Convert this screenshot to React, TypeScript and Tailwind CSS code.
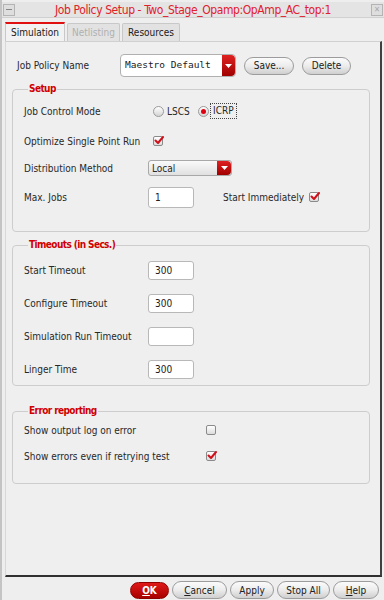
import React from "react";

const FONT = "font-['DejaVu_Sans_Condensed','DejaVu_Sans',sans-serif]";

function Check({ checked }: { checked: boolean }) {
  return (
    <span className="relative inline-flex h-[10px] w-[10px] items-center justify-center rounded-[2px] border border-[#8a8a8a] bg-gradient-to-b from-[#ffffff] to-[#dcdcdc]">
      {checked && (
        <svg width="10" height="9" viewBox="0 0 10 9" className="absolute left-[0px] top-[-1px]">
          <path d="M1.5 4.5 L4 7 L9 1" stroke="#d0101a" strokeWidth="2" fill="none" strokeLinecap="round" strokeLinejoin="round" />
        </svg>
      )}
    </span>
  );
}

function Radio({ on }: { on: boolean }) {
  return (
    <span className="inline-flex h-[11px] w-[11px] items-center justify-center rounded-full border border-[#9a9a9a] bg-gradient-to-b from-[#ffffff] to-[#d4d4d4]">
      {on && <span className="h-[5px] w-[5px] rounded-full bg-[#e00010]" />}
    </span>
  );
}

function DropBtn({ w, h }: { w: string; h: string }) {
  return (
    <span className={`flex ${w} ${h} items-center justify-center rounded-r-[4px] bg-gradient-to-b from-[#e02020] to-[#a00000]`}>
      <svg width="7" height="4" viewBox="0 0 7 4">
        <path d="M0 0 L7 0 L3.5 4 Z" fill="#ffffff" />
      </svg>
    </span>
  );
}

function PillButton({ children, w, className = "" }: { children: React.ReactNode; w: string; className?: string }) {
  return (
    <span
      className={`flex ${w} h-[18px] items-center justify-center rounded-full border border-[#9c9c9c] bg-gradient-to-b from-[#fbfbfb] via-[#ececec] to-[#cfcfcf] text-[10px] text-[#202020] ${className}`}
    >
      {children}
    </span>
  );
}

function TextBox({ value, w, h }: { value: string; w: string; h: string }) {
  return (
    <span className={`flex ${w} ${h} items-center rounded-[3px] border border-[#b8b8b8] bg-white pl-[6px] text-[10px] text-[#202020]`}>
      {value}
    </span>
  );
}

function Legend({ children }: { children: React.ReactNode }) {
  return (
    <legend className="ml-[4px] h-[14px] px-[1px] text-[10px] font-bold leading-[14px] tracking-[-0.6px] text-[#d00000]">{children}</legend>
  );
}

export default function App() {
  return (
    <div className={`${FONT} relative h-[600px] w-[384px] overflow-hidden bg-[#eeeeee] text-[10px] text-[#282828]`}>
      <div className="flex h-full flex-col border-l-[2px] border-[#c4c4c4]">
        {/* title bar */}
        <div className="mt-[2px] flex h-[16px] items-center border-b border-[#d0d0d0] bg-[#e4e4e4] pl-[1px] pr-[1px]">
          <span className="flex h-[12px] w-[12px] items-center justify-center border border-[#b4b4b4] bg-[#dedede]">
            <span className="h-[1px] w-[6px] bg-[#888]" />
          </span>
          <span className="flex-1 text-center text-[12px] leading-[16px] tracking-[-0.4px] text-[#e0202c]">
            Job Policy Setup - Two_Stage_Opamp:OpAmp_AC_top:1
          </span>
          <span className="flex h-[12px] w-[12px] items-center justify-center border border-[#b4b4b4] bg-[#dedede] text-[8px] leading-none text-[#aaa]">
            ✕
          </span>
        </div>

        {/* tabs */}
        <div className="ml-[3px] mt-[4px] flex h-[19px] items-end gap-[2px]">
          <span className="flex h-[19px] w-[60px] items-center justify-center border-l border-r border-[#c8c8c8] border-t-[2px] border-t-[#e01010] bg-[#f2f2f2] text-[#202020]">
            Simulation
          </span>
          <span className="flex h-[18px] w-[53px] items-center justify-center rounded-t-[2px] border border-b-0 border-[#c8c8c8] bg-[#e2e2e2] text-[#b0b0b0]">
            Netlisting
          </span>
          <span className="flex h-[18px] w-[58px] items-center justify-center rounded-t-[2px] border border-b-0 border-[#c8c8c8] bg-[#e2e2e2] text-[#202020]">
            Resources
          </span>
        </div>

        {/* panel */}
        <div className="ml-[3px] mr-[2px] flex h-[536px] flex-col border-b-[2px] border-l border-r-[2px] border-t border-b-[#303030] border-l-[#d8d8d8] border-r-[#404040] border-t-[#d0d0d0] bg-[#efefef] pl-[6px] pr-[10px]">
          {/* Job policy name */}
          <div className="mt-[12px] flex h-[23px] items-center">
            <span className="ml-[5px] w-[103px]">Job Policy Name</span>
            <span className="flex h-[23px] w-[116px] items-stretch rounded-[4px] border border-[#b0b0b0] bg-white">
              <span className="flex flex-1 items-center pl-[4px] font-['DejaVu_Sans_Mono',monospace] text-[9.5px] text-[#202020]">
                Maestro Default
              </span>
              <DropBtn w="w-[13px]" h="h-auto" />
            </span>
            <PillButton w="w-[50px]" className="ml-[8px]">Save...</PillButton>
            <PillButton w="w-[49px]" className="ml-[8px]">Delete</PillButton>
          </div>

          {/* Setup */}
          <fieldset className="mt-[5px] h-[150px] rounded-[4px] border border-[#cdcdcd] px-[11px]">
            <Legend>Setup</Legend>
            <div className="mt-[5px] flex h-[20px] items-center">
              <span className="w-[129px]">Job Control Mode</span>
              <Radio on={false} />
              <span className="ml-[3px] w-[31px]">LSCS</span>
              <Radio on={true} />
              <span className="ml-[1px] border border-dotted border-[#444] px-[2px] leading-[14px]">ICRP</span>
            </div>
            <div className="mt-[10px] flex h-[20px] items-center">
              <span className="w-[129px]">Optimize Single Point Run</span>
              <Check checked={true} />
            </div>
            <div className="mt-[7px] flex h-[20px] items-center">
              <span className="w-[124px]">Distribution Method</span>
              <span className="flex h-[16px] w-[84px] items-stretch rounded-[3px] border border-[#a8a8a8] bg-gradient-to-b from-[#fafafa] to-[#e0e0e0]">
                <span className="flex flex-1 items-center pl-[3px]">Local</span>
                <DropBtn w="w-[14px]" h="h-auto" />
              </span>
            </div>
            <div className="mt-[8px] flex h-[22px] items-center">
              <span className="w-[124px]">Max. Jobs</span>
              <TextBox value="1" w="w-[46px]" h="h-[21px]" />
              <span className="ml-[29px] w-[86px]">Start Immediately</span>
              <Check checked={true} />
            </div>
          </fieldset>

          {/* Timeouts */}
          <fieldset className="mt-[6px] h-[148px] rounded-[4px] border border-[#cdcdcd] px-[11px]">
            <Legend>Timeouts (in Secs.)</Legend>
            <div className="mt-[9px] flex flex-col gap-[14px]">
              {[
                ["Start Timeout", "300"],
                ["Configure Timeout", "300"],
                ["Simulation Run Timeout", ""],
                ["Linger Time", "300"],
              ].map(([l, v]) => (
                <div key={l} className="flex h-[19px] items-center">
                  <span className="w-[124px]">{l}</span>
                  <TextBox value={v} w="w-[46px]" h="h-[19px]" />
                </div>
              ))}
            </div>
          </fieldset>

          {/* Error reporting */}
          <fieldset className="mt-[18px] h-[80px] rounded-[4px] border border-[#cdcdcd] px-[11px]">
            <Legend>Error reporting</Legend>
            <div className="mt-[4px] flex h-[16px] items-center">
              <span className="w-[182px]">Show output log on error</span>
              <Check checked={false} />
            </div>
            <div className="mt-[10px] flex h-[16px] items-center">
              <span className="w-[182px]">Show errors even if retrying test</span>
              <Check checked={true} />
            </div>
          </fieldset>
        </div>

        {/* bottom buttons */}
        <div className="mt-[4px] flex h-[18px] items-center justify-end gap-[3px] pr-[5px]">
          <span className="flex h-[17px] w-[39px] items-center justify-center rounded-full border border-[#900000] bg-gradient-to-b from-[#e01818] to-[#a80000] font-bold text-white">
            <span className="underline">O</span>K
          </span>
          <PillButton w="w-[55px]">
            <span className="underline">C</span>ancel
          </PillButton>
          <PillButton w="w-[44px]">Apply</PillButton>
          <PillButton w="w-[53px]">Stop All</PillButton>
          <PillButton w="w-[46px]">
            <span className="underline">H</span>elp
          </PillButton>
        </div>
      </div>
    </div>
  );
}
